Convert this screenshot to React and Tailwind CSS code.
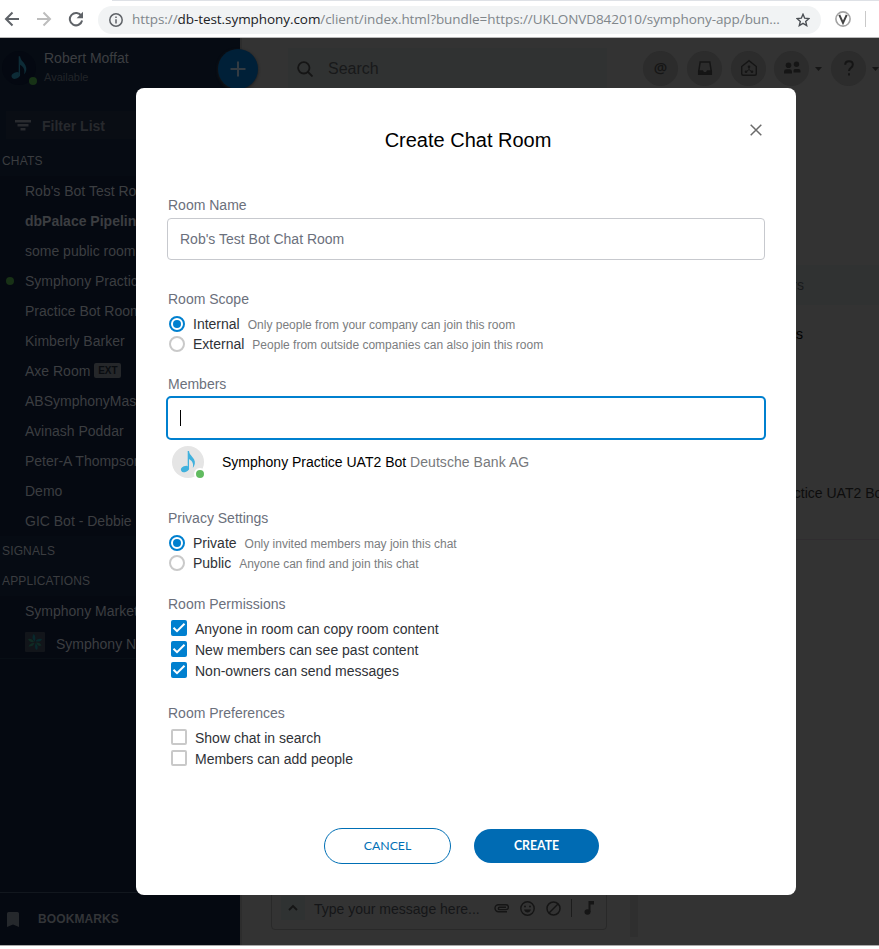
import React from "react";

const chats = [
  { name: "Rob's Bot Test Room" },
  { name: "dbPalace Pipelines", bold: true },
  { name: "some public room" },
  { name: "Symphony Practice UAT2", online: true },
  { name: "Practice Bot Room" },
  { name: "Kimberly Barker" },
  { name: "Axe Room", ext: true },
  { name: "ABSymphonyMaster" },
  { name: "Avinash Poddar" },
  { name: "Peter-A Thompson" },
  { name: "Demo" },
  { name: "GIC Bot - Debbie" },
];

function Note({ className, fill }) {
  return (
    <svg className={className} viewBox="0 0 32 32" fill={fill}>
      <ellipse cx="13" cy="23" rx="4.200" ry="2.900" transform="rotate(-25 13 23)" />
      <path d="M15.700 5h1.300c.4 3.700 3.300 5.200 5 8.300 1.700 3.200.9 6.200-1.200 8.700 .8-3.900.1-6.600-3.800-9v10.500h-1.300z" />
    </svg>
  );
}

function BrowserBar() {
  return (
    <div className="flex h-[38px] shrink-0 flex-col border-b border-[#b9b9b9] bg-white">
      <div className="ml-[112px] h-px shrink-0 bg-[#dee1e6]" />
      <div className="flex flex-1 items-center pb-px">
        <svg className="ml-1 size-4" viewBox="0 0 16 16" fill="none" stroke="#5f6368" strokeWidth="2">
          <path d="M15 8H2.500M8.500 1.500L2 8l6.500 6.500" />
        </svg>
        <svg className="ml-4 size-4" viewBox="0 0 16 16" fill="none" stroke="#bdbdbd" strokeWidth="2">
          <path d="M1 8h12.500M7.500 1.500L14 8l-6.500 6.500" />
        </svg>
        <svg className="ml-4 size-4" viewBox="0 0 16 16">
          <path d="M13.400 5A6.200 6.200 0 1 0 14.100 9.500" fill="none" stroke="#5f6368" strokeWidth="2" />
          <path d="M15 .8v6.400H8.600z" fill="#5f6368" />
        </svg>
        <div className="ml-[14px] mt-0.5 flex h-7 w-[723px] items-center rounded-full bg-[#f1f3f4]">
          <svg className="ml-[11px] size-[14px] shrink-0" viewBox="0 0 14 14" fill="none" stroke="#5f6368" strokeWidth="1.500">
            <circle cx="7" cy="7" r="6.200" />
            <path d="M7 6.200v4.200M7 3.500v1.500" />
          </svg>
          <span className="ml-[9px] w-[650px] whitespace-nowrap font-['Open_Sans',sans-serif] text-[13.5px] tracking-[-0.065px] text-[#80868b]">
            https://<span className="text-[#202124]">db-test.symphony.com</span>/client/index.html?bundle=https://UKLONVD842010/symphony-app/bun...
          </span>
          <svg className="ml-[14px] size-[14px] shrink-0" viewBox="0 0 14 14" fill="none" stroke="#4b4f54" strokeWidth="1.400">
            <path d="M7 1.300l1.700 3.900 4.200.4-3.200 2.800 1 4.200L7 10.400l-3.700 2.200 1-4.200L1.100 5.600l4.200-.4z" />
          </svg>
        </div>
        <svg className="ml-[14px] size-4" viewBox="0 0 16 16" fill="none">
          <circle cx="8" cy="8" r="7.100" stroke="#a3a3a3" strokeWidth="1.600" />
          <path d="M4.300 3.800L8 11.800l3.700-8" stroke="#444" strokeWidth="2" />
        </svg>
        <div className="ml-[14px] h-4 w-px bg-[#c9c9c9]" />
      </div>
    </div>
  );
}

function SectionTitle({ children }) {
  return <div className="flex h-[30px] items-center bg-[#060b13] pl-0.5 text-[12px] tracking-[0.15px] text-[#3b3d40]">{children}</div>;
}

function Sidebar() {
  return (
    <div className="flex w-60 shrink-0 flex-col bg-[#050911] text-[14px] text-[#3c3e41]">
      <div className="flex h-[73px] bg-[#060b13] pt-3">
        <div className="relative ml-0.5 mt-px size-[34px] rounded-full bg-[#040811]">
          <Note className="size-[34px]" fill="#0d2b36" />
          <span className="absolute bottom-0 right-[-1px] size-2 rounded-full bg-[#173216]" />
        </div>
        <div className="ml-2">
          <div className="h-4 leading-4">Robert Moffat</div>
          <div className="mt-1 h-3.5 text-[11px] leading-[14px] text-[#222529]">Available</div>
        </div>
      </div>
      <div className="bg-[#060b13] pb-1.5 pl-1.5">
        <div className="flex h-7 items-center bg-[#090d14] pt-0.5 font-bold text-[#27292d]">
          <svg className="mb-0.5 ml-[9px] mr-[11px] h-3 w-4" viewBox="0 0 16 12" fill="#292b2f">
            <path d="M0 1h16v2.500H0zM2.500 5h11v2.500h-11zM5.500 9h5v2.500h-5z" />
          </svg>
          Filter List
        </div>
      </div>
      <div className="bg-[#060b13] pt-px">
        <SectionTitle>CHATS</SectionTitle>
      </div>
      <div>
        {chats.map((c) => (
          <div key={c.name} className={"flex h-[30px] items-center whitespace-nowrap " + (c.bold ? "font-bold" : "")}>
            <span className={"ml-1.5 mr-[11px] size-2 shrink-0 rounded-full " + (c.online ? "bg-[#183116]" : "")} />
            {c.name}
            {c.ext && (
              <span className="ml-1 mt-[-1px] flex h-[15px] w-[27px] items-center justify-center rounded-[2px] bg-[#25272a] text-[10px] font-bold text-[#090c10]">
                EXT
              </span>
            )}
          </div>
        ))}
      </div>
      <SectionTitle>SIGNALS</SectionTitle>
      <SectionTitle>APPLICATIONS</SectionTitle>
      <div className="flex h-[30px] items-center pl-[25px]">Symphony Market</div>
      <div className="flex h-8 items-center pl-[25px] pt-1">
        <svg className="mb-1 mr-[11px] size-5" viewBox="0 0 20 20">
          <rect width="20" height="20" rx="1" fill="#12151a" />
          <g fill="#08292d">
            <path d="M9.500 9.500Q6 6 8.500 2q2.500 1 1.500 7.500z" />
            <path d="M10.500 9.500Q12 6 17 7q-.5 3-6.500 2.500z" />
            <path d="M10.500 11q3.500 3 1.500 7-3-1-1.500-7z" />
          </g>
          <g fill="#102b24">
            <path d="M9 10Q5 11 3 7q4-1 6 3z" />
            <path d="M9.500 11q-1.500 4-6 3.500Q5 10.500 9.500 11z" />
            <path d="M11 10.500q4-.5 5.500 3-3.500 1.500-5.500-3z" />
          </g>
        </svg>
        Symphony News
      </div>
      <div className="flex-1 border-t border-[#080e15]" />
      <div className="flex h-[53px] items-center border-t border-[#12171e] text-[12px] font-bold tracking-[0.1px] text-[#333538]">
        <svg className="ml-[7px] mr-[19px] h-[15px] w-3" viewBox="0 0 12 15" fill="#25282c">
          <path d="M0 1.500Q0 0 1.500 0h9Q12 0 12 1.500V15l-6-2.500L0 15z" />
        </svg>
        BOOKMARKS
      </div>
    </div>
  );
}

function Round({ children, className = "" }) {
  return <div className={"flex size-[35px] shrink-0 items-center justify-center rounded-full bg-[#2c2c2c] " + className}>{children}</div>;
}

function Caret() {
  return (
    <svg className="h-1 w-[7px] shrink-0" viewBox="0 0 7 4" fill="#161616">
      <path d="M0 0h7L3.500 4z" />
    </svg>
  );
}

function Main() {
  return (
    <div className="flex min-w-0 flex-1 flex-col border-l-2 border-[#2d2d2d] bg-[#333333] text-[14px]">
      <div className="flex h-[60px] shrink-0 items-center overflow-hidden">
        <div className="ml-[46px] flex h-10 w-[319px] shrink-0 items-center bg-[#303232] pt-px text-[16px] text-[#18191a]">
          <svg className="ml-[9px] mr-[15px] size-4" viewBox="0 0 16 16" fill="none" stroke="#151515" strokeWidth="1.800">
            <circle cx="6.800" cy="6.800" r="5.700" />
            <path d="M11 11l4.500 4.500" />
          </svg>
          Search
        </div>
        <Round className="ml-9">
          <span className="pb-0.5 font-['Noto_Sans'] text-[15px] font-semibold text-[#161616]">@</span>
        </Round>
        <Round className="ml-[9px]">
          <svg className="size-4" viewBox="0 0 16 16" fill="none" stroke="#151515" strokeWidth="1.500">
            <path d="M3.200 2h9.600L14.300 11.500v2.800H1.700v-2.800z" />
            <path d="M2 11h3.500l1 1.700h3l1-1.700H14v3H2z" fill="#151515" />
          </svg>
        </Round>
        <Round className="ml-[9px]">
          <svg className="size-[18px]" viewBox="0 0 18 18" fill="none" stroke="#151515" strokeWidth="1.400">
            <path d="M1.700 7.500L9 1.700l7.300 5.800v7.300q0 1.500-1.500 1.500H3.200q-1.500 0-1.500-1.500z" />
            <path d="M9 8v2.500L6 13M9 10.500l3 2.500" strokeWidth="1" />
            <g fill="#151515" stroke="none">
              <circle cx="9" cy="7.700" r="1.300" />
              <circle cx="6" cy="12.800" r="1.300" />
              <circle cx="12" cy="12.800" r="1.300" />
            </g>
          </svg>
        </Round>
        <Round className="ml-[8px]">
          <svg className="h-3.5 w-[18px]" viewBox="0 0 18 14" fill="#151515">
            <circle cx="5.500" cy="4.200" r="2.800" />
            <circle cx="13.500" cy="3.200" r="2.700" />
            <path d="M1 12.500V10.700Q1 8.300 3.500 8.300h3.200Q9 8.300 9 10.700v1.800zM10.500 11.500V9.500q0-1.500 1.500-1.500h3.500q2 0 2 2v1.500z" />
          </svg>
        </Round>
        <div className="ml-[6px] mt-px">
          <Caret />
        </div>
        <Round className="ml-[9px]">
          <svg className="h-4 w-2.5" viewBox="0 0 10 16" fill="none" stroke="#151515" strokeWidth="2">
            <path d="M1.200 4.800Q1.200 1.200 5 1.200t3.800 3.300Q8.800 6.300 7 7.700T5 11" />
            <path d="M5 13.300v2.200" />
          </svg>
        </Round>
        <div className="ml-[6px] mt-px shrink-0">
          <Caret />
        </div>
      </div>
      <div className="mt-[167px] flex h-10 items-center bg-[#303232]">
        <div className="w-[562px] text-right text-[#191a1c]">Members</div>
      </div>
      <div className="mt-[19px] w-[561px] text-right leading-5 text-black">Members</div>
      <div className="ml-[460px] mt-[139px] overflow-hidden whitespace-nowrap leading-5 text-[#0d0d0d]">
        Symphony Practice UAT2 Bot
      </div>
      <div className="mt-[36px] h-px bg-[#302d30]" />
      <div className="flex flex-1 items-end">
        <div className="mb-[15px] ml-[29px] flex h-14 w-[336px] items-center rounded border border-[#292929] pt-3.5 text-[#151618]">
          <div className="mb-0.5 ml-[9px] flex h-6 w-6 items-center justify-center bg-[#2f3232]">
            <svg className="h-2 w-3" viewBox="0 0 12 8" fill="none" stroke="#151515" strokeWidth="1.800">
              <path d="M2 6l4-4 4 4" />
            </svg>
          </div>
          <span className="ml-[9px] w-[166px] whitespace-nowrap">Type your message here...</span>
          <svg className="mb-0.5 ml-[14px] h-[9px] w-[15px]" viewBox="0 0 15 9" fill="none" stroke="#151515" strokeWidth="1.400">
            <path d="M13 7.800H4.500a3.300 3.300 0 0 1 0-7H12a2.300 2.300 0 0 1 0 4.800H5.500a1.100 1.100 0 0 1 0-2.300H12" />
          </svg>
          <svg className="mb-0.5 ml-[11px] size-[15px]" viewBox="0 0 15 15" fill="none" stroke="#151515" strokeWidth="1.400">
            <circle cx="7.500" cy="7.500" r="6.700" />
            <path d="M4 8.500h7q-1 3-3.500 3T4 8.500z" fill="#151515" stroke="none" />
            <circle cx="5" cy="5.500" r="1" fill="#151515" stroke="none" />
            <circle cx="10" cy="5.500" r="1" fill="#151515" stroke="none" />
          </svg>
          <svg className="mb-0.5 ml-[11px] size-[15px]" viewBox="0 0 15 15" fill="none" stroke="#151515" strokeWidth="1.500">
            <circle cx="7.500" cy="7.500" r="6.500" />
            <path d="M12 3l-9 9" />
          </svg>
          <div className="mb-0.5 ml-[10px] h-[18px] w-px bg-[#1c1c1c]" />
          <svg className="mb-0.5 ml-3 h-[14px] w-2.5" viewBox="0 0 10 14" fill="#151515">
            <ellipse cx="3.500" cy="11" rx="3" ry="2.700" />
            <path d="M4.500 0H10v3.500H6.500V11h-2z" />
          </svg>
        </div>
        <div className="mb-2 ml-[23px] h-16 w-2 bg-[#2f2f2f]" />
      </div>
    </div>
  );
}

function Label({ children, className = "" }) {
  return <div className={"ml-px text-[14px] leading-5 text-[#6b707c] " + className}>{children}</div>;
}

function Radio({ checked, label, hint }) {
  return (
    <div className="flex h-5 items-center pl-0.5">
      <span className={"flex size-4 items-center justify-center rounded-full border-2 " + (checked ? "border-[#0080cf]" : "border-[#c9c9c9]")}>
        {checked && <span className="size-2 rounded-full bg-[#0080cf]" />}
      </span>
      <span className="ml-2 text-[14px] text-[#2f3237]">{label}</span>
      <span className="ml-2 pt-0.5 text-[12px] text-[#7b7d80]">{hint}</span>
    </div>
  );
}

function Check({ checked, label }) {
  return (
    <div className="flex h-[21px] items-center pl-1">
      <span className={"mb-0.5 flex size-4 items-center justify-center rounded-[2px] " + (checked ? "bg-[#0080cf]" : "border-2 border-[#c9c9c9]")}>
        {checked && (
          <svg className="size-4" viewBox="0 0 16 16" fill="none" stroke="white" strokeWidth="2">
            <path d="M2.500 7.800L6 11.200l7.500-7.500" />
          </svg>
        )}
      </span>
      <span className="ml-2 pt-px text-[14px] text-[#2f3237]">{label}</span>
    </div>
  );
}

function Modal() {
  return (
    <div className="absolute left-[136px] top-[88px] flex h-[807px] w-[660px] flex-col rounded-lg bg-white pl-[31px] pr-[31px]">
      <div className="relative mt-[38px] text-center text-[20px] leading-7 text-black">
        <span className="pl-1">Create Chat Room</span>
        <svg className="absolute right-[3px] top-[-2px] size-3" viewBox="0 0 12 12" fill="none" stroke="#6b6b6b" strokeWidth="1.500">
          <path d="M.7.7l10.600 10.600M11.300.7L.7 11.300" />
        </svg>
      </div>
      <Label className="mt-[41px]">Room Name</Label>
      <div className="mt-[3px] flex h-[42px] items-center rounded border border-[#c7c9ce] pl-3 text-[14px] text-[#6b707c]">
        Rob's Test Bot Chat Room
      </div>
      <Label className="mt-[29px]">Room Scope</Label>
      <div className="mt-[5px]">
        <Radio checked label="Internal" hint="Only people from your company can join this room" />
        <Radio label="External" hint="People from outside companies can also join this room" />
      </div>
      <Label className="mt-5">Members</Label>
      <div className="-mx-px mt-0.5 flex h-11 items-center rounded-[5px] border-2 border-[#0080cf] pl-3">
        <span className="h-4 w-px bg-black" />
      </div>
      <div className="mt-[6px] flex h-8 items-center pl-[5px]">
        <div className="relative size-8 rounded-full bg-[#e5e5e5]">
          <Note className="size-8" fill="#40b1dd" />
          <span className="absolute bottom-[-2px] right-[-2px] size-3 rounded-full border-2 border-white bg-[#61bb60]" />
        </div>
        <span className="ml-[18px] text-[14px] text-black">
          Symphony Practice UAT2 Bot <span className="tracking-[0.06px] text-[#77797c]">Deutsche Bank AG</span>
        </span>
      </div>
      <Label className="mt-[30px]">Privacy Settings</Label>
      <div className="mt-[5px]">
        <Radio checked label="Private" hint="Only invited members may join this chat" />
        <Radio label="Public" hint="Anyone can find and join this chat" />
      </div>
      <Label className="mt-[21px]">Room Permissions</Label>
      <div className="mt-1">
        <Check checked label="Anyone in room can copy room content" />
        <Check checked label="New members can see past content" />
        <Check checked label="Non-owners can send messages" />
      </div>
      <Label className="mt-[22px]">Room Preferences</Label>
      <div className="mt-1">
        <Check label="Show chat in search" />
        <Check label="Members can add people" />
      </div>
      <div className="mt-[59px] flex items-center pl-[157px] font-['Lato',sans-serif] text-[12.300px]">
        <div className="flex h-9 w-[127px] items-center justify-center rounded-full border border-[#006fb5] text-[#006fb5]">CANCEL</div>
        <div className="ml-[23px] flex h-[34px] w-[125px] items-center justify-center rounded-full bg-[#006bb3] font-bold text-white">CREATE</div>
      </div>
    </div>
  );
}

export default function App() {
  return (
    <div className="h-[949px] w-[879px] overflow-hidden bg-white font-['Liberation_Sans',Arial,sans-serif]">
      <div className="relative flex h-[946px] flex-col border-b border-[#a9a9a9]">
        <BrowserBar />
        <div className="flex min-h-0 flex-1">
          <Sidebar />
          <Main />
        </div>
        <div className="absolute left-[218px] top-[49px] flex size-10 items-center justify-center rounded-full bg-[#002038] shadow-[0_1px_3px_#1a1a1a]">
          <svg className="size-4" viewBox="0 0 16 16" stroke="#333b42" strokeWidth="2">
            <path d="M8 .5v15M.5 8h15" />
          </svg>
        </div>
        <Modal />
      </div>
    </div>
  );
}
